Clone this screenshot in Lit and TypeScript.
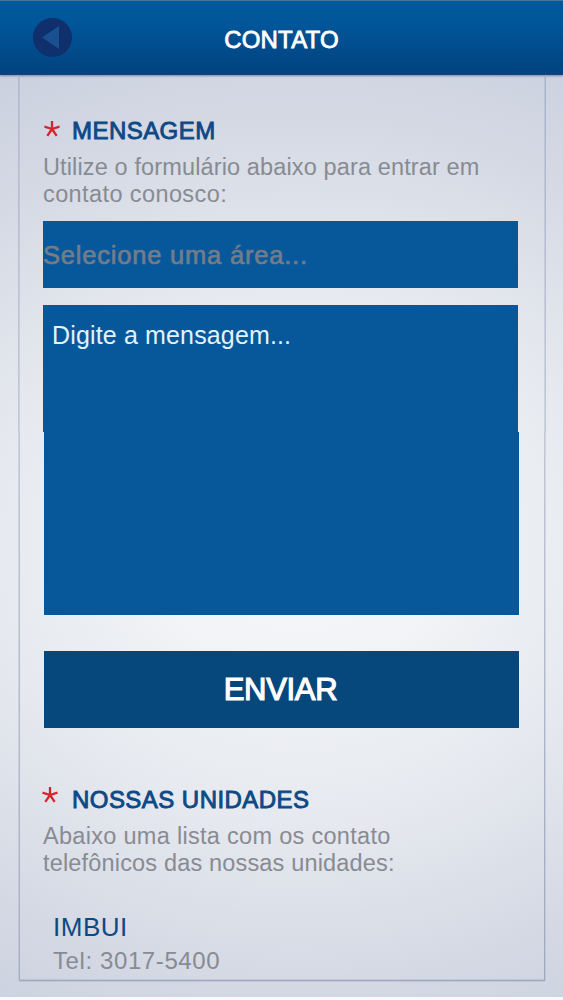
import {html, css, LitElement} from 'lit';
import {customElement, property} from 'lit/decorators.js';

@customElement('section-intro')
export class SectionIntro extends LitElement {
  @property({ type: String }) public heading = '';

  static styles = css`
    :host {
      display: block;
      font-family: "Liberation Sans", Arial, sans-serif;
    }

    header {
      display: flex;
      align-items: center;
      height: 28px;
    }

    .star {
      flex: none;
      width: 16px;
      height: 16px;
      margin: var(--star-margin, 0 12px 4px 1px);
    }

    h2 {
      margin: 0;
      font-size: 24px;
      font-weight: 400;
      line-height: 28px;
      letter-spacing: 0.45px;
      color: #0d4985;
      -webkit-text-stroke: 0.9px #0d4985;
      white-space: nowrap;
    }

    p {
      margin: 9px 0 0;
      padding-bottom: 1px;
      font-size: 23.5px;
      line-height: 27px;
      color: #888b92;
      white-space: nowrap;
    }
  `;

  render() {
    return html`
      <header>
        <svg class="star" viewBox="0 0 16 16" fill="none" stroke="#d8232a" stroke-width="2.3">
          <path d="M8 8V0M8 8L0.5 5.6M8 8L15.5 5.6M8 8L3.3 14.8M8 8L12.7 14.8"/>
        </svg>
        <h2>${this.heading}</h2>
      </header>
      <p><slot></slot></p>
    `;
  }
}

@customElement('app-root')
export class AppRoot extends LitElement {
  static styles = css`
    :host {
      display: flex;
      flex-direction: column;
      box-sizing: border-box;
      height: 1000px;
      overflow: hidden;
      border-bottom: 3px solid #f7fbfd;
      background: radial-gradient(ellipse 620px 540px at 300px 550px, #f8f8fa 0%, #f1f3f6 24%, #e5e8ee 52%, #d4d9e4 80%, #cbd1df 100%);
      font-family: "Liberation Sans", Arial, sans-serif;
    }

    .bar {
      display: grid;
      grid-template-columns: 40px 1fr 40px;
      align-items: center;
      flex: none;
      box-sizing: border-box;
      height: 75px;
      padding: 0 33px;
      border-top: 1px solid #47749a;
      border-bottom: 1px solid #164578;
      background: linear-gradient(#00599c, #01569a 30%, #02427f);
      box-shadow: 0 1px 2px rgba(40, 70, 120, .55);
    }

    .back {
      display: block;
      width: 39px;
      height: 39px;
    }

    h1 {
      margin: 4px 0 0;
      font-size: 24px;
      font-weight: 400;
      line-height: 28px;
      letter-spacing: 0.2px;
      text-align: center;
      color: #fff;
      -webkit-text-stroke: 0.8px #fff;
    }

    /* the side rules step one pixel inwards halfway down */
    .panel {
      box-sizing: border-box;
      height: 907px;
      margin: 0 17px 0 18px;
      padding: 42px 27px 0 25px;
      border-radius: 0 0 3px 3px;
      background:
        linear-gradient(#b0b7ca, #c3c7d5) 0 0 / 1px 357px no-repeat,
        linear-gradient(#c3c7d5, #a6aec4) 1px 357px / 1px 549px no-repeat,
        linear-gradient(#a9b3cd, #c3c7d5) 527px 0 / 1px 357px no-repeat,
        linear-gradient(#c3c7d5, #a0a8be) 526px 357px / 1px 549px no-repeat,
        linear-gradient(#a2aabf, #a2aabf) 2px 905px / 524px 1px no-repeat,
        linear-gradient(rgba(150, 160, 190, .3), rgba(150, 160, 190, .3)) 0 0 / 2px 907px no-repeat,
        linear-gradient(rgba(150, 160, 190, .3), rgba(150, 160, 190, .3)) 526px 0 / 2px 907px no-repeat,
        linear-gradient(rgba(150, 160, 190, .3), rgba(150, 160, 190, .3)) 2px 904px / 524px 3px no-repeat;
    }

    .line {
      display: block;
    }

    .line.first {
      letter-spacing: 0.13px;
    }

    .line.second {
      letter-spacing: 0.4px;
    }

    .line.third {
      letter-spacing: 0.3px;
    }

    .line.fourth {
      letter-spacing: 0.17px;
    }

    .select {
      display: flex;
      align-items: center;
      box-sizing: border-box;
      width: 475px;
      height: 67px;
      margin-top: 12px;
      padding-top: 2px;
      background: #07589b;
      font-size: 25.5px;
      letter-spacing: 0.8px;
      color: #727c8a;
      -webkit-text-stroke: 0.7px #727c8a;
    }

    .message {
      box-sizing: border-box;
      width: 476px;
      height: 310px;
      margin-top: 17px;
      padding: 16px 9px;
      background: #07589b;
      clip-path: polygon(0 0, 475px 0, 475px 127px, 476px 127px, 476px 100%, 1px 100%, 1px 127px, 0 127px);
      font-size: 25px;
      line-height: 29px;
      letter-spacing: 0.15px;
      color: #e2f2ff;
    }

    .send {
      display: block;
      width: 475px;
      height: 77px;
      margin: 36px 0 0 1px;
      padding: 0 2px 0 0;
      border: 0;
      background: #06477c;
      font-family: inherit;
      font-size: 31px;
      letter-spacing: -0.3px;
      color: #fff;
      -webkit-text-stroke: 1.2px #fff;
    }

    .units {
      margin-top: 58px;
      --star-margin: 0 14px 11px -1px;
    }

    .unit {
      margin: 32px 0 0 10px;
      line-height: 34px;
      color: #888b92;
      font-size: 24px;
      letter-spacing: 0.6px;
    }

    .unit h3 {
      margin: 0;
      font-size: 26px;
      font-weight: 400;
      letter-spacing: 0.5px;
      color: #0d4985;
    }
  `;

  render() {
    return html`
      <nav class="bar">
        <svg class="back" viewBox="0 0 39 39">
          <circle cx="19.5" cy="19.5" r="19.5" fill="#0f2f6d"/>
          <path d="M9 19.5L26 8V31Z" fill="#195190"/>
        </svg>
        <h1>CONTATO</h1>
      </nav>
      <main class="panel">
        <section-intro heading="MENSAGEM">
          <span class="line first">Utilize o formulário abaixo para entrar em</span>
          <span class="line second">contato conosco:</span>
        </section-intro>
        <div class="select">Selecione uma área...</div>
        <div class="message">Digite a mensagem...</div>
        <button class="send">ENVIAR</button>
        <section-intro class="units" heading="NOSSAS UNIDADES">
          <span class="line third">Abaixo uma lista com os contato</span>
          <span class="line fourth">telefônicos das nossas unidades:</span>
        </section-intro>
        <div class="unit">
          <h3>IMBUI</h3>
          <div>Tel: 3017-5400</div>
        </div>
      </main>
    `;
  }
}
